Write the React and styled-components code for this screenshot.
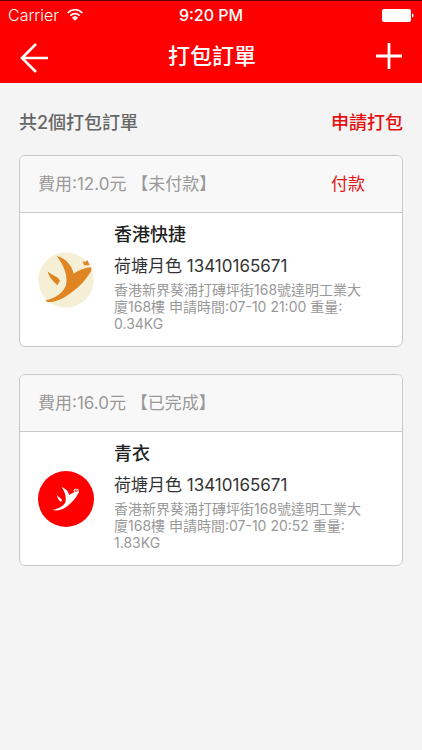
import styled, { createGlobalStyle } from "styled-components";

const orders = [
  {
    id: 1,
    fee: "12.0",
    status: "未付款",
    payable: true,
    variant: "cream",
    name: "香港快捷",
    contact: "荷塘月色 13410165671",
    detail: "香港新界葵涌打磚坪街168號達明工業大廈168樓 申請時間:07-10 21:00 重量: 0.34KG",
  },
  {
    id: 2,
    fee: "16.0",
    status: "已完成",
    payable: false,
    variant: "red",
    name: "青衣",
    contact: "荷塘月色 13410165671",
    detail: "香港新界葵涌打磚坪街168號達明工業大廈168樓 申請時間:07-10 20:52 重量: 1.83KG",
  },
];

const WifiIcon = () => (
  <svg width="16" height="12" viewBox="0 0 48 36" aria-hidden="true">
    <g fill="none" stroke="#fff" strokeWidth="5">
      <path d="M2 12 C14 -1 34 -1 46 12" />
      <path d="M10 20 C18 12 30 12 38 20" />
    </g>
    <path d="M15 26 C20 20 28 20 33 26 L24 35 Z" fill="#fff" />
  </svg>
);

const BatteryIcon = () => (
  <svg width="32" height="13" viewBox="0 0 32 13" aria-hidden="true">
    <rect x="0" y="0" width="29" height="13" rx="2" fill="#fff" />
    <path d="M30 4.5 C32 5 32 8 30 8.5 Z" fill="#fff" />
  </svg>
);

const BackIcon = () => (
  <svg width="28" height="34" viewBox="0 -4 28 34" aria-hidden="true">
    <path d="M16 1 L2 15 L16 29 M2 15 H28" fill="none" stroke="#fff" strokeWidth="2.6" />
  </svg>
);

const PlusIcon = () => (
  <svg width="26" height="26" viewBox="0 0 26 26" aria-hidden="true">
    <path d="M13 0 V26 M0 13 H26" fill="none" stroke="#fff" strokeWidth="2.8" />
  </svg>
);

const CreamLogo = () => (
  <svg width="56" height="56" viewBox="25 37 168 168" aria-hidden="true">
    <circle cx="109" cy="121" r="83" fill="#f5efd5" />
    <g fill="#df8522">
      <path d="M81 49 C108 56 126 76 132 102 C148 91 166 84 186 83 L184 95 C168 122 148 144 116 165 C94 180 72 188 53 187 L47 182 C76 177 101 160 109 137 C116 108 102 76 81 49 Z" />
      <path d="M54 95 C62 106 84 108 91 123 L83 137 C73 126 58 116 54 95 Z" />
      <path d="M159 64 L166 68 L173 61 L180 77 L163 77 Z" />
    </g>
  </svg>
);

const RedLogo = () => (
  <svg width="56" height="56" viewBox="25 33 168 168" aria-hidden="true">
    <circle cx="109" cy="117" r="84" fill="#fe0000" />
    <g fill="#fff">
      <path d="M96 81 C109 86 117 95 118 105 C123 102 129 99 134 97 L131 91 L136 86 L146 87 L148 97 C142 105 141 111 133 119 C119 134 108 145 91 150 C83 152 75 152 68 150 C86 147 103 138 107 127 C111 112 106 96 96 81 Z" />
      <path d="M81 101 C84 112 93 112 97 120 L94 126 C88 122 82 114 81 101 Z" />
    </g>
    <path d="M136 90 H143 V94 H136 Z" fill="none" stroke="#fe0000" strokeWidth="2" />
  </svg>
);

const OrderCard = ({ order }) => (
  <Card>
    <CardHeader>
      <span>
        費用:{order.fee}元 【{order.status}】
      </span>
      {order.payable && <PayButton type="button">付款</PayButton>}
    </CardHeader>
    <CardBody>
      {order.variant === "cream" ? <CreamLogo /> : <RedLogo />}
      <Info>
        <Name>{order.name}</Name>
        <Contact>{order.contact}</Contact>
        <Detail>{order.detail}</Detail>
      </Info>
    </CardBody>
  </Card>
);

const App = () => (
  <>
    <GlobalStyle />
    <Header>
      <StatusBar>
        <Carrier>
          Carrier <WifiIcon />
        </Carrier>
        <Time>9:20 PM</Time>
        <Battery>
          <BatteryIcon />
        </Battery>
      </StatusBar>
      <NavBar>
        <IconButton type="button" aria-label="返回">
          <BackIcon />
        </IconButton>
        <Title>打包訂單</Title>
        <IconButton type="button" aria-label="新增">
          <PlusIcon />
        </IconButton>
      </NavBar>
    </Header>
    <Main>
      <Summary>
        <Count>共2個打包訂單</Count>
        <ApplyLink href="#apply">申請打包</ApplyLink>
      </Summary>
      <List>
        {orders.map((order) => (
          <OrderCard key={order.id} order={order} />
        ))}
      </List>
    </Main>
  </>
);

const GlobalStyle = createGlobalStyle`
  * {
    box-sizing: border-box;
  }
  body {
    margin: 0;
    background: #f4f4f4;
    font-family: Inter, "Noto Sans CJK TC", sans-serif;
  }
  button {
    padding: 0;
    border: 0;
    background: none;
    font-family: inherit;
    cursor: pointer;
  }
  svg {
    display: block;
    flex-shrink: 0;
  }
`;

const Header = styled.header`
  background: #fe0000;
  border-top: 1px solid #600000;
  color: #fff;
`;

const StatusBar = styled.div`
  display: grid;
  grid-template-columns: 1fr auto 1fr;
  align-items: center;
  height: 28px;
  padding: 0 8px;
  font-size: 16px;
`;

const Carrier = styled.div`
  display: flex;
  align-items: center;
  gap: 8px;
  font-weight: 300;
`;

const Time = styled.div`
  font-weight: 500;
`;

const Battery = styled.div`
  display: flex;
  justify-content: flex-end;
`;

const NavBar = styled.nav`
  display: flex;
  align-items: center;
  justify-content: space-between;
  height: 54px;
  padding: 0 20px;
`;

const IconButton = styled.button`
  display: flex;
  align-items: center;
  justify-content: center;
  height: 44px;
`;

const Title = styled.h1`
  margin: 0;
  font-size: 22px;
  font-weight: 500;
  line-height: 32px;
`;

const Main = styled.main`
  padding: 27px 19px;
`;

const Summary = styled.div`
  display: flex;
  align-items: center;
  justify-content: space-between;
  font-size: 18px;
  line-height: 26px;
`;

const Count = styled.h2`
  margin: 0;
  color: #666;
  font-size: 18px;
  font-weight: 500;
`;

const ApplyLink = styled.a`
  color: #e60f0f;
  font-weight: 500;
  text-decoration: none;
`;

const List = styled.div`
  display: flex;
  flex-direction: column;
  gap: 27px;
  margin-top: 19px;
`;

const Card = styled.article`
  overflow: hidden;
  border: 1px solid #c8c8c8;
  border-radius: 6px;
  background: #fff;
`;

const CardHeader = styled.div`
  display: flex;
  align-items: center;
  justify-content: space-between;
  height: 57px;
  padding: 0 37px 4px 18px;
  border-bottom: 1px solid #c8c8c8;
  background: #f8f8f8;
  color: #999;
  font-size: 17px;
`;

const PayButton = styled.button`
  color: #e01818;
  font-size: 17px;
`;

const CardBody = styled.div`
  display: flex;
  align-items: center;
  gap: 20px;
  padding: 0 30px 0 18px;
`;

const Info = styled.div`
  flex: 1;
  padding: 9px 0 14px;
`;

const Name = styled.h3`
  margin: 0;
  color: #222;
  font-size: 18px;
  font-weight: 500;
  line-height: 26px;
`;

const Contact = styled.p`
  margin: 5px 0 2px;
  color: #333;
  font-size: 17px;
  line-height: 26px;
`;

const Detail = styled.p`
  margin: 0;
  color: #999;
  font-size: 14px;
  line-height: 17px;
`;

export default App;
